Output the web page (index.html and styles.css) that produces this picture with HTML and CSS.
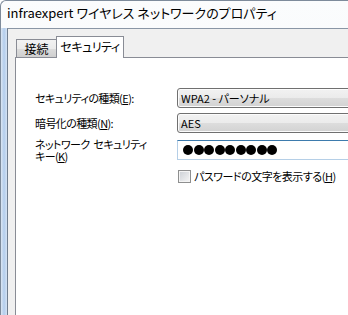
FILE: index.html
```html
<!DOCTYPE html>
<html lang="ja">
<head>
    <meta charset="UTF-8">
    <title>infraexpert ワイヤレス ネットワークのプロパティ</title>
    <link rel="stylesheet" href="styles.css">
</head>
<body>
    <div class="window">
        <div class="titlebar">infraexpert ワイヤレス ネットワークのプロパティ</div>

        <div class="frame">
            <div class="frame-left"></div>

            <div class="client">
                <!-- タブ -->
                <div class="tabs">
                    <div class="tab">接続</div>
                    <div class="tab active">セキュリティ</div>
                </div>

                <!-- セキュリティ ページ -->
                <div class="panel">
                    <div class="form">
                        <label class="label">セキュリティの種類(<u>E</u>):</label>
                        <div class="combo">WPA2 - パーソナル</div>

                        <label class="label">暗号化の種類(<u>N</u>):</label>
                        <div class="combo">AES</div>

                        <label class="label two-lines">ネットワーク セキュリティ<br>キー(<u>K</u>)</label>
                        <div class="password">
                            <span class="dot"></span><span class="dot"></span><span class="dot"></span>
                            <span class="dot"></span><span class="dot"></span><span class="dot"></span>
                            <span class="dot"></span><span class="dot"></span><span class="dot"></span>
                        </div>

                        <div></div>
                        <div class="check-row">
                            <span class="checkbox"></span>
                            <span>パスワードの文字を表示する(<u>H</u>)</span>
                        </div>
                    </div>
                </div>
            </div>
        </div>
    </div>
</body>
</html>
```

FILE: styles.css
```css
body {
    margin: 0;
    padding: 0;
    background-color: #ffffff;
    font-family: 'Noto Sans CJK JP', 'Noto Sans', sans-serif;
    font-feature-settings: "palt";
    color: #000;
}

.window {
    width: 348px;
    height: 315px;
    overflow: hidden;
    display: flex;
    flex-direction: column;
    box-sizing: border-box;
    border-left: 1px solid #7e8b9b;
    border-top: 1px solid #7e8b9b;
    border-top-left-radius: 6px;
    background: linear-gradient(to bottom, #fbfcfd, #eef2f7);
}

.titlebar {
    height: 27px;
    flex: none;
    box-sizing: border-box;
    padding: 4px 0 0 6px;
    font-size: 13px;
    line-height: 16px;
    white-space: nowrap;
    color: #000;
}

.frame {
    flex: 1;
    display: flex;
}

.frame-left {
    width: 6px;
    flex: none;
    background: linear-gradient(to right, #dbe6f3, #b3cdec 50%, #d5e3f4);
}

.client {
    flex: 1;
    display: flex;
    flex-direction: column;
    border-left: 1px solid #6f7d8e;
    border-top: 1px solid #8a96a5;
    background-color: #f0f0f0;
    padding: 7px 0 0 7px;
}

.tabs {
    display: flex;
    align-items: flex-end;
    height: 21px;
    padding-left: 1px;
    position: relative;
    z-index: 1;
}

.tab {
    box-sizing: border-box;
    height: 18px;
    width: 41px;
    border: 1px solid #898c95;
    border-bottom: none;
    background: linear-gradient(to bottom, #f2f2f2, #ebebeb 50%, #dddddd 50%, #cfcfcf);
    font-size: 12px;
    line-height: 18px;
    text-align: center;
}

.tab.active {
    width: 68px;
    height: 22px;
    margin-left: -1px;
    margin-bottom: -1px;
    background: #ffffff;
    line-height: 19px;
    letter-spacing: -0.5px;
}

.panel {
    flex: 1;
    background-color: #ffffff;
    border-left: 1px solid #898c95;
    border-top: 1px solid #898c95;
}

.form {
    display: grid;
    grid-template-columns: 142px 200px;
    row-gap: 5px;
    padding: 30px 0 0 19px;
    font-size: 11px;
}

.label {
    display: flex;
    align-items: center;
    line-height: 14px;
    white-space: nowrap;
    letter-spacing: -0.6px;
}

.label.two-lines {
    display: block;
    line-height: 12px;
    word-spacing: 2px;
}

.combo {
    box-sizing: border-box;
    height: 20px;
    border: 1px solid #707070;
    border-radius: 3px;
    padding-left: 3px;
    line-height: 18px;
    white-space: nowrap;
    background: linear-gradient(to bottom, #f2f2f2, #ebebeb 50%, #dddddd 50%, #d2d2d2);
    box-shadow: inset 0 0 0 1px #fcfcfc;
}

.password {
    box-sizing: border-box;
    height: 20px;
    margin-top: 2px;
    border: 1px solid #b5cfe7;
    border-top-color: #3d7bad;
    background-color: #ffffff;
    display: flex;
    align-items: center;
    gap: 0.5px;
    padding-left: 5px;
}

.dot {
    width: 10px;
    height: 10px;
    border-radius: 50%;
    background-color: #000;
}

.check-row {
    display: flex;
    align-items: center;
    gap: 3px;
    margin-top: 2px;
    margin-left: 1px;
    white-space: nowrap;
    line-height: 14px;
    letter-spacing: -0.5px;
}

.checkbox {
    box-sizing: border-box;
    width: 13px;
    height: 13px;
    border: 1px solid #8e8f8f;
    background: linear-gradient(135deg, #cbcfd5, #f6f6f6);
    box-shadow: inset 0 0 0 1px #f4f4f4;
}
```
